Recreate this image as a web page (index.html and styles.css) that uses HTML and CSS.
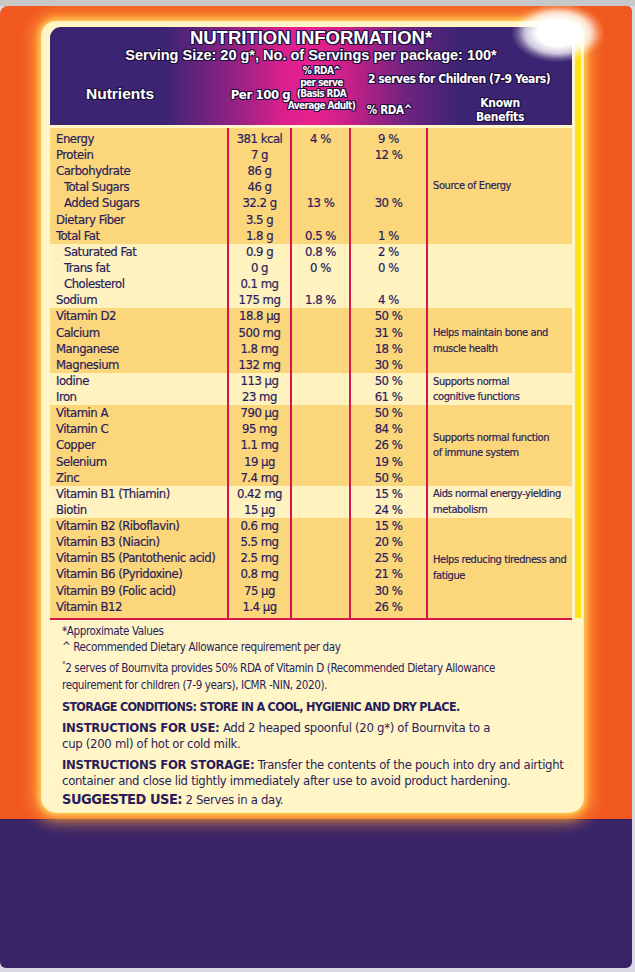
FILE: index.html
```html
<!DOCTYPE html>
<html lang="en">
<head>
<meta charset="utf-8">
<title>Nutrition Information</title>
<link rel="stylesheet" href="styles.css">
</head>
<body>
<div class="pack">
  <div class="orange">
    <div class="panel">
      <div class="head">
        <div class="h-title">NUTRITION INFORMATION*</div>
        <div class="h-serv">Serving Size: 20 g*, No. of Servings per package: 100*</div>
        <div class="h-nut">Nutrients</div>
        <div class="h-per">Per 100 g</div>
        <div class="h-adult">% RDA^<br>per serve<br>(Basis RDA<br>Average Adult)</div>
        <div class="h-child">2 serves for Children (7-9 Years)</div>
        <div class="h-rda">% RDA^</div>
        <div class="h-known">Known<br>Benefits</div>
      </div>
      <div class="table">
        <div class="grp dark g1">
          <div class="ben s7">Source of Energy</div>
          <div class="n">Energy</div><div class="v">381 kcal</div><div class="v">4 %</div><div class="v">9 %</div>
          <div class="n">Protein</div><div class="v">7 g</div><div class="v"></div><div class="v">12 %</div>
          <div class="n">Carbohydrate</div><div class="v">86 g</div><div class="v"></div><div class="v"></div>
          <div class="n ind">Total Sugars</div><div class="v">46 g</div><div class="v"></div><div class="v"></div>
          <div class="n ind">Added Sugars</div><div class="v">32.2 g</div><div class="v">13 %</div><div class="v">30 %</div>
          <div class="n">Dietary Fiber</div><div class="v">3.5 g</div><div class="v"></div><div class="v"></div>
          <div class="n">Total Fat</div><div class="v">1.8 g</div><div class="v">0.5 %</div><div class="v">1 %</div>
        </div>
        <div class="grp light">
          <div class="ben s4"></div>
          <div class="n ind">Saturated Fat</div><div class="v">0.9 g</div><div class="v">0.8 %</div><div class="v">2 %</div>
          <div class="n ind">Trans fat</div><div class="v">0 g</div><div class="v">0 %</div><div class="v">0 %</div>
          <div class="n ind">Cholesterol</div><div class="v">0.1 mg</div><div class="v"></div><div class="v"></div>
          <div class="n">Sodium</div><div class="v">175 mg</div><div class="v">1.8 %</div><div class="v">4 %</div>
        </div>
        <div class="grp dark">
          <div class="ben s4">Helps maintain bone and<br>muscle health</div>
          <div class="n">Vitamin D2</div><div class="v">18.8 µg</div><div class="v"></div><div class="v">50 %</div>
          <div class="n">Calcium</div><div class="v">500 mg</div><div class="v"></div><div class="v">31 %</div>
          <div class="n">Manganese</div><div class="v">1.8 mg</div><div class="v"></div><div class="v">18 %</div>
          <div class="n">Magnesium</div><div class="v">132 mg</div><div class="v"></div><div class="v">30 %</div>
        </div>
        <div class="grp light">
          <div class="ben s2">Supports normal<br>cognitive functions</div>
          <div class="n">Iodine</div><div class="v">113 µg</div><div class="v"></div><div class="v">50 %</div>
          <div class="n">Iron</div><div class="v">23 mg</div><div class="v"></div><div class="v">61 %</div>
        </div>
        <div class="grp dark">
          <div class="ben s5">Supports normal function<br>of immune system</div>
          <div class="n">Vitamin A</div><div class="v">790 µg</div><div class="v"></div><div class="v">50 %</div>
          <div class="n">Vitamin C</div><div class="v">95 mg</div><div class="v"></div><div class="v">84 %</div>
          <div class="n">Copper</div><div class="v">1.1 mg</div><div class="v"></div><div class="v">26 %</div>
          <div class="n">Selenium</div><div class="v">19 µg</div><div class="v"></div><div class="v">19 %</div>
          <div class="n">Zinc</div><div class="v">7.4 mg</div><div class="v"></div><div class="v">50 %</div>
        </div>
        <div class="grp light">
          <div class="ben s2">Aids normal energy-yielding<br>metabolism</div>
          <div class="n">Vitamin B1 (Thiamin)</div><div class="v">0.42 mg</div><div class="v"></div><div class="v">15 %</div>
          <div class="n">Biotin</div><div class="v">15 µg</div><div class="v"></div><div class="v">24 %</div>
        </div>
        <div class="grp dark g7">
          <div class="ben s6">Helps reducing tiredness and<br>fatigue</div>
          <div class="n">Vitamin B2 (Riboflavin)</div><div class="v">0.6 mg</div><div class="v"></div><div class="v">15 %</div>
          <div class="n">Vitamin B3 (Niacin)</div><div class="v">5.5 mg</div><div class="v"></div><div class="v">20 %</div>
          <div class="n">Vitamin B5 (Pantothenic acid)</div><div class="v">2.5 mg</div><div class="v"></div><div class="v">25 %</div>
          <div class="n">Vitamin B6 (Pyridoxine)</div><div class="v">0.8 mg</div><div class="v"></div><div class="v">21 %</div>
          <div class="n">Vitamin B9 (Folic acid)</div><div class="v">75 µg</div><div class="v"></div><div class="v">30 %</div>
          <div class="n">Vitamin B12</div><div class="v">1.4 µg</div><div class="v"></div><div class="v">26 %</div>
        </div>
      </div>
      <div class="notes">
        <p class="note">*Approximate Values<br>^ Recommended Dietary Allowance requirement per day</p>
        <p class="note"><sup class="deg">°</sup>2 serves of Bournvita provides 50% RDA of Vitamin D (Recommended Dietary Allowance<br>requirement for children (7-9 years), ICMR -NIN, 2020).</p>
        <p class="big">STORAGE CONDITIONS: STORE IN A COOL, HYGIENIC AND DRY PLACE.</p>
        <p class="ins"><b>INSTRUCTIONS FOR USE:</b> Add 2 heaped spoonful (20 g*) of Bournvita to a<br>cup (200 ml) of hot or cold milk.</p>
        <p class="ins"><b>INSTRUCTIONS FOR STORAGE:</b> Transfer the contents of the pouch into dry and airtight<br>container and close lid tightly immediately after use to avoid product hardening.</p>
        <p class="sug"><b>SUGGESTED USE:</b> 2 Serves in a day.</p>
      </div>
    </div>
  </div>
  <div class="purple"></div>
</div>
</body>
</html>
```

FILE: styles.css
```css
* { box-sizing: border-box; margin: 0; padding: 0; }

html, body {
  width: 635px;
  height: 972px;
  overflow: hidden;
}

body {
  background: linear-gradient(#c8c8c8 0, #c8c8c8 6px, #dcd8e6 6px);
  font-family: "DejaVu Sans Condensed", "Liberation Sans", sans-serif;
  color: #2a1d5c;
}

.pack {
  margin-top: 6px;
  width: 632px;
  border-radius: 8px 5px 6px 6px;
  overflow: hidden;
}

.orange {
  background: #f1581f;
  padding: 16px 49px 7px 42px;
}

.purple {
  height: 149px;
  background: #3a2468;
  border-top: 1px solid #2c1a55;
}

.panel {
  position: relative;
  height: 790px;
  background: #fff5c6;
  border-radius: 14px;
  padding: 5px 11px 0 8px;
  box-shadow: 0 0 0 1px #ffeeb0, 0 0 6px 3px #ffd35c, 0 0 16px 8px #ff9d3c;
}

.panel::before {
  content: "";
  position: absolute;
  left: 533px;
  top: 22px;
  width: 6px;
  height: 574px;
  background: #ffe11a;
}

.panel::after {
  content: "";
  position: absolute;
  left: 470px;
  top: -18px;
  width: 92px;
  height: 58px;
  background: radial-gradient(ellipse at center, #ffffff 0%, #ffffff 32%, rgba(255,255,255,0.75) 50%, rgba(255,255,255,0.25) 62%, rgba(255,255,255,0) 72%);
}

/* ---------- header ---------- */
.head {
  display: grid;
  grid-template-columns: 179px 63px 59px 77px 144px;
  grid-template-rows: 18px 16px 31px 31px;
  height: 98px;
  padding-top: 2px;
  border-radius: 11px 11px 0 0;
  background: linear-gradient(90deg, #3a2472 0%, #3d2474 22%, #8a2283 34%, #d6208b 44%, #e8218d 50%, #c92088 57%, #702380 68%, #3d2474 78%, #3a2472 100%);
  color: #ffffff;
  font-weight: bold;
  white-space: nowrap;
  text-shadow: 1px 0 #1f1240, -1px 0 #1f1240, 0 1px #1f1240, 0 -1px #1f1240,
               1px 1px #1f1240, -1px -1px #1f1240, 1px -1px #1f1240, -1px 1px #1f1240;
}

.h-title {
  grid-column: 1 / -1;
  text-align: center;
  font-family: "Liberation Sans", Arial, sans-serif;
  font-size: 18.5px;
  line-height: 18px;
}

.h-serv {
  grid-column: 1 / -1;
  text-align: center;
  font-family: "Liberation Sans", Arial, sans-serif;
  font-size: 14.5px;
  line-height: 16px;
}

.h-nut {
  grid-column: 1;
  grid-row: 3 / 5;
  align-self: center;
  padding-left: 36px;
  font-family: "Liberation Sans", Arial, sans-serif;
  font-size: 15.5px;
}

.h-per {
  grid-column: 2;
  grid-row: 3 / 5;
  align-self: center;
  text-align: center;
  font-size: 13px;
  letter-spacing: -0.4px;
}

.h-adult {
  grid-column: 3;
  grid-row: 3 / 5;
  align-self: start;
  padding-top: 2px;
  margin: 0 -6px;
  text-align: center;
  font-size: 10px;
  letter-spacing: -0.6px;
  line-height: 11.7px;
}

.h-child {
  grid-column: 4 / 6;
  grid-row: 3;
  align-self: center;
  padding: 1px 0 0 17px;
  font-size: 12px;
  letter-spacing: -0.45px;
}

.h-rda {
  grid-column: 4;
  grid-row: 4;
  align-self: center;
  text-align: center;
  font-size: 11.5px;
  letter-spacing: -0.3px;
}

.h-known {
  grid-column: 5;
  grid-row: 4;
  align-self: center;
  text-align: center;
  font-size: 12px;
  letter-spacing: -0.3px;
  line-height: 14px;
}

/* ---------- table ---------- */
.table {
  margin-top: 3px;
  border-bottom: 2px solid #d7164f;
}

.grp {
  display: grid;
  grid-template-columns: 179px 63px 59px 77px 144px;
  grid-auto-rows: 16.14px;
}

.grp.dark { background: #fcd67a; }
.grp.light { background: #fff2bf; }

.grp.g1 { grid-template-rows: 19.14px; }
.grp.g7 { grid-template-rows: repeat(5, 16.14px) 19.14px; }

.n, .v {
  display: flex;
  align-items: flex-start;
  border-right: 2px solid #d7164f;
  font-size: 13px;
  letter-spacing: -0.5px;
  line-height: 16.14px;
  white-space: nowrap;
  -webkit-text-stroke: 0.2px #2a1d5c;
}

.g1 .n, .g1 .v { align-items: flex-end; }

.n { padding-left: 6px; }
.n.ind { padding-left: 14px; }
.v { justify-content: center; }

.ben {
  grid-column: 5;
  display: flex;
  align-items: center;
  padding-left: 5px;
  font-size: 11px;
  letter-spacing: -0.4px;
  line-height: 15.5px;
  white-space: nowrap;
  -webkit-text-stroke: 0.2px #2a1d5c;
}

.s2 { grid-row: 1 / span 2; }
.s4 { grid-row: 1 / span 4; }
.s5 { grid-row: 1 / span 5; }
.s6 { grid-row: 1 / span 6; }
.s7 { grid-row: 1 / span 7; }

/* ---------- notes ---------- */
.notes {
  padding: 3px 0 0 12px;
  white-space: nowrap;
}

.note {
  font-size: 11.6px;
  letter-spacing: -0.4px;
  line-height: 16.5px;
  margin-bottom: 4.5px;
}

.deg {
  font-size: 8px;
  vertical-align: 4px;
  line-height: 0;
}

.big {
  font-weight: bold;
  font-size: 12.5px;
  letter-spacing: -0.7px;
  line-height: 18px;
  margin-bottom: 4px;
}

.ins {
  font-size: 13px;
  letter-spacing: -0.3px;
  line-height: 16px;
  margin-bottom: 5px;
}

.sug {
  margin-top: -4px;
  font-size: 13px;
  letter-spacing: -0.3px;
  line-height: 18px;
}

.sug b {
  font-size: 14.5px;
  letter-spacing: -0.5px;
}
```
